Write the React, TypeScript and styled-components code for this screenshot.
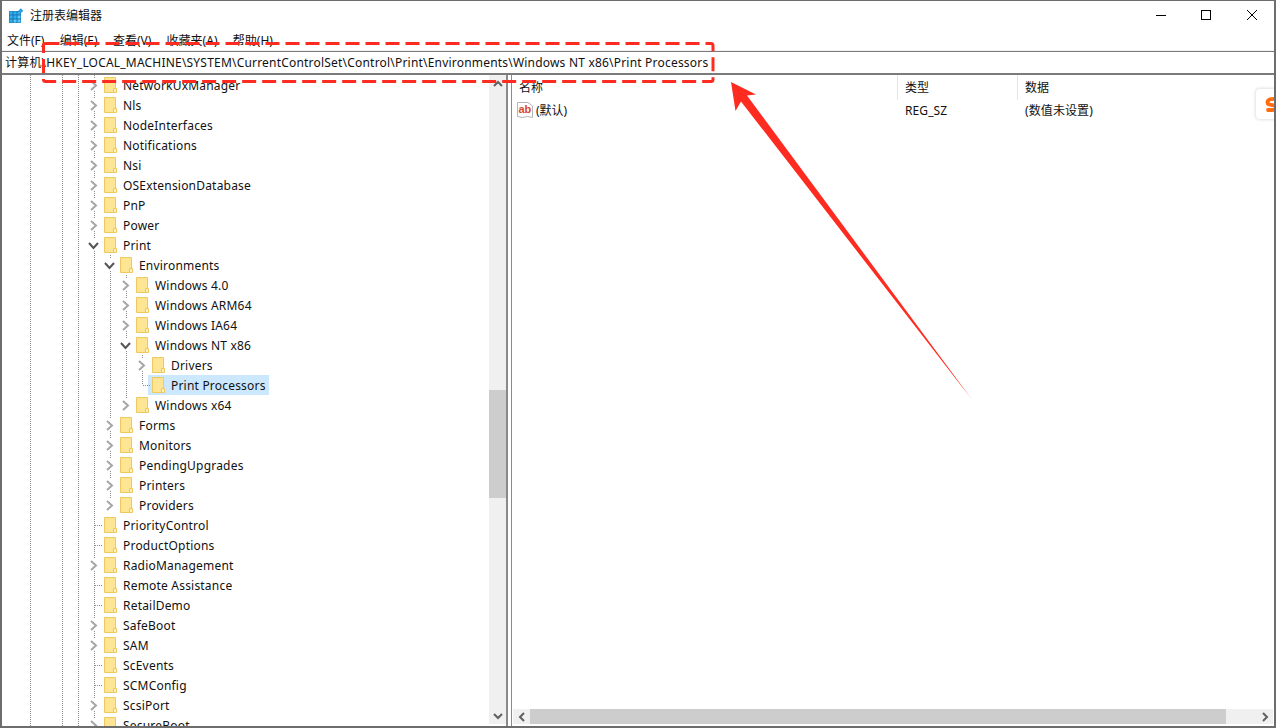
import React from 'react';
import styled, { createGlobalStyle } from 'styled-components';

const GlobalStyle = createGlobalStyle`
    html, body {
        margin: 0;
        padding: 0;
        background: #ffffff;
    }
    * {
        box-sizing: border-box;
    }
`;

const Window = styled.div`
    position: relative;
    width: 1276px;
    height: 728px;
    display: flex;
    flex-direction: column;
    overflow: hidden;
    background: #ffffff;
    border: 1px solid #6d6d6d;
    border-width: 1px 2px 2px 2px;
    font-family: 'Noto Sans', 'Noto Sans CJK SC', sans-serif;
    font-size: 12px;
    color: #111111;
`;

const TitleBar = styled.div`
    height: 29px;
    display: flex;
    align-items: center;
    padding: 0 0 1px 7px;
    flex-shrink: 0;
`;

const Title = styled.div`
    margin-left: 6px;
`;

const Controls = styled.div`
    margin-left: auto;
    display: flex;
    align-items: center;
    padding-right: 17px;
    gap: 35px;
    & > svg:last-child {
        margin-left: 1px;
    }
`;

const MenuBar = styled.div`
    height: 21px;
    display: flex;
    align-items: center;
    padding-left: 5px;
    gap: 15.3px;
    flex-shrink: 0;
    border-bottom: 1px solid #f0f0f0;
`;

const AddressBar = styled.div`
    height: 24px;
    display: flex;
    align-items: center;
    padding: 0 0 2px 3px;
    flex-shrink: 0;
    white-space: nowrap;
    letter-spacing: 0.2px;
    border-top: 1px solid #7b7b7b;
    border-bottom: 2px solid #7b7b7b;
`;

const Panes = styled.div`
    flex: 1;
    min-height: 0;
    display: flex;
`;

const TreePane = styled.div`
    width: 506px;
    flex-shrink: 0;
    display: flex;
    border-right: 2px solid #8a8a8a;
`;

const Tree = styled.div`
    flex: 1;
    min-width: 0;
    overflow: hidden;
    padding-left: 20px;
    letter-spacing: 0.2px;
`;

const Row = styled.div`
    height: 20px;
    display: flex;
    align-items: stretch;
    white-space: nowrap;
`;

const Guide = styled.span<{ $kind: 'none' | 'full' | 'last' }>`
    position: relative;
    width: 16px;
    flex-shrink: 0;
    background-repeat: no-repeat;
    background-image: ${(p) =>
        p.$kind === 'none'
            ? 'none'
            : 'repeating-linear-gradient(to bottom, #8c8c8c 0 1px, transparent 1px 2px)'};
    background-position: 8px 0;
    background-size: 1px ${(p) => (p.$kind === 'last' ? '10px' : '100%')};
`;

const Branch = styled.span`
    position: absolute;
    left: 9px;
    top: 10px;
    width: 7px;
    height: 1px;
    background-image: repeating-linear-gradient(to right, #8c8c8c 0 1px, transparent 1px 2px);
`;

const Expander = styled.span`
    position: absolute;
    left: 2px;
    top: 4px;
    width: 11px;
    height: 12px;
    background: #ffffff;
    display: flex;
    align-items: center;
    justify-content: center;
`;

const Item = styled.div<{ $selected?: boolean }>`
    display: flex;
    align-items: center;
    margin-left: -2px;
    padding: 0 3px 0 4px;
    gap: 6px;
    background: ${(p) => (p.$selected ? '#cce8ff' : 'transparent')};
`;

const TreeScrollbar = styled.div`
    width: 17px;
    flex-shrink: 0;
    display: flex;
    flex-direction: column;
    margin-bottom: 2px;
    background: #f0f0f0;
`;

const ArrowBox = styled.div<{ $wide?: boolean }>`
    width: ${(p) => (p.$wide ? '17px' : '100%')};
    height: ${(p) => (p.$wide ? '100%' : '17px')};
    flex-shrink: 0;
    display: flex;
    align-items: center;
    justify-content: center;
`;

const VerticalTrack = styled.div`
    flex: 1;
    padding-top: 298px;
`;

const VerticalThumb = styled.div`
    height: 108px;
    background: #cdcdcd;
`;

const ListPane = styled.div`
    flex: 1;
    min-width: 0;
    display: flex;
    flex-direction: column;
    margin-left: 3px;
    border-left: 1px solid #8a8a8a;
`;

const ListHeader = styled.div`
    height: 25px;
    display: grid;
    grid-template-columns: 386px 120px 1fr;
    flex-shrink: 0;
`;

const HeaderCell = styled.div`
    padding: 0 0 2px 7px;
    display: flex;
    align-items: center;
    border-right: 1px solid #e5e5e5;
    &:last-child {
        border-right: none;
    }
`;

const ListBody = styled.div`
    flex: 1;
    min-height: 0;
`;

const ListRow = styled.div`
    height: 20px;
    display: grid;
    grid-template-columns: 386px 120px 1fr;
    align-items: center;
`;

const NameCell = styled.div`
    display: flex;
    align-items: center;
    gap: 3px;
    padding-left: 5px;
`;

const ValueCell = styled.div`
    padding-left: 7px;
    letter-spacing: 0.1px;
`;

const HorizontalScrollbar = styled.div`
    height: 15px;
    display: flex;
    flex-shrink: 0;
    margin: 0 1px 2px 1px;
    background: #f0f0f0;
`;

const HorizontalTrack = styled.div`
    flex: 1;
    padding-right: 30px;
`;

const HorizontalThumb = styled.div`
    height: 100%;
    background: #cdcdcd;
`;

const SideTab = styled.div`
    position: absolute;
    right: -2px;
    top: 87px;
    width: 21px;
    height: 32px;
    background: #ffffff;
    border: 1px solid #ececec;
    border-right: none;
    border-radius: 5px 0 0 5px;
    box-shadow: 0 0 3px rgba(0, 0, 0, 0.12);
    overflow: hidden;
`;

const Markup = styled.svg`
    position: absolute;
    left: -2px;
    top: -1px;
    pointer-events: none;
`;

type TreeNode = {
    name: string;
    depth: number;
    state: 'closed' | 'open' | 'leaf';
    last?: boolean;
    selected?: boolean;
};

const rows: TreeNode[] = [
    { name: 'NetworkUxManager', depth: 0, state: 'closed' },
    { name: 'Nls', depth: 0, state: 'closed' },
    { name: 'NodeInterfaces', depth: 0, state: 'closed' },
    { name: 'Notifications', depth: 0, state: 'closed' },
    { name: 'Nsi', depth: 0, state: 'closed' },
    { name: 'OSExtensionDatabase', depth: 0, state: 'closed' },
    { name: 'PnP', depth: 0, state: 'closed' },
    { name: 'Power', depth: 0, state: 'closed' },
    { name: 'Print', depth: 0, state: 'open' },
    { name: 'Environments', depth: 1, state: 'open' },
    { name: 'Windows 4.0', depth: 2, state: 'closed' },
    { name: 'Windows ARM64', depth: 2, state: 'closed' },
    { name: 'Windows IA64', depth: 2, state: 'closed' },
    { name: 'Windows NT x86', depth: 2, state: 'open' },
    { name: 'Drivers', depth: 3, state: 'closed' },
    { name: 'Print Processors', depth: 3, state: 'leaf', last: true, selected: true },
    { name: 'Windows x64', depth: 2, state: 'closed', last: true },
    { name: 'Forms', depth: 1, state: 'closed' },
    { name: 'Monitors', depth: 1, state: 'closed' },
    { name: 'PendingUpgrades', depth: 1, state: 'closed' },
    { name: 'Printers', depth: 1, state: 'closed' },
    { name: 'Providers', depth: 1, state: 'closed', last: true },
    { name: 'PriorityControl', depth: 0, state: 'leaf' },
    { name: 'ProductOptions', depth: 0, state: 'leaf' },
    { name: 'RadioManagement', depth: 0, state: 'closed' },
    { name: 'Remote Assistance', depth: 0, state: 'leaf' },
    { name: 'RetailDemo', depth: 0, state: 'leaf' },
    { name: 'SafeBoot', depth: 0, state: 'closed' },
    { name: 'SAM', depth: 0, state: 'closed' },
    { name: 'ScEvents', depth: 0, state: 'leaf' },
    { name: 'SCMConfig', depth: 0, state: 'leaf' },
    { name: 'ScsiPort', depth: 0, state: 'closed' },
    { name: 'SecureBoot', depth: 0, state: 'closed' },
];

const Folder = () => (
    <svg width="13" height="16" viewBox="0 0 13 16">
        <path d="M0.5 0.5H11.5V15.5H0.5Z" fill="#fde594" stroke="#efc95f" />
        <path d="M9.5 15.5V11.5H12.5V15.5Z" fill="#fff0bc" stroke="#efc95f" />
    </svg>
);

const ChevronRight = () => (
    <svg width="9" height="11" viewBox="0 0 9 11">
        <path d="M2 1L7 5.5L2 10" fill="none" stroke="#a6a6a6" strokeWidth="2" />
    </svg>
);

const ChevronDown = () => (
    <svg width="11" height="9" viewBox="0 0 11 9">
        <path d="M1 2L5.5 7L10 2" fill="none" stroke="#555555" strokeWidth="2" />
    </svg>
);

const ScrollArrow = ({ dir }: { dir: 'up' | 'down' | 'left' | 'right' }) => {
    const paths = {
        up: 'M1 6L5 2L9 6',
        down: 'M1 2L5 6L9 2',
        left: 'M6 1L2 5L6 9',
        right: 'M2 1L6 5L2 9',
    };
    const horizontal = dir === 'left' || dir === 'right';
    return (
        <svg width={horizontal ? 8 : 10} height={horizontal ? 10 : 8} viewBox={horizontal ? '0 0 8 10' : '0 0 10 8'}>
            <path d={paths[dir]} fill="none" stroke="#606060" strokeWidth="2" />
        </svg>
    );
};

const RegeditIcon = () => (
    <svg width="15" height="15" viewBox="0 0 15 15">
        <rect x="0" y="3" width="12" height="12" fill="#1378bd" />
        {[0.5, 4.5, 8.5].map((y) =>
            [0.5, 4.5, 8.5].map((x) => (
                <rect key={`${x}-${y}`} x={x} y={y + 3} width="3" height="3" fill={x + y > 9 ? '#5cc8f2' : '#35aee6'} />
            ))
        )}
        <rect x="10" y="1" width="3.6" height="3.6" fill="#2d9fdc" transform="rotate(45 11.8 2.8)" />
    </svg>
);

const StringValueIcon = () => (
    <svg width="16" height="17" viewBox="0 0 16 17">
        <path d="M0.5 0.5H11L15.5 4V15.5L10.5 14.5L5 15.5L0.5 14.5Z" fill="#ffffff" stroke="#b4b4b4" />
        <text x="1.5" y="10.5" fontFamily="'Liberation Sans', sans-serif" fontSize="11" fontWeight="700" fill="#d8492a">
            ab
        </text>
    </svg>
);

const App = () => {
    return (
        <>
            <GlobalStyle />
            <Window>
                <TitleBar>
                    <RegeditIcon />
                    <Title>注册表编辑器</Title>
                    <Controls>
                        <svg width="10" height="10" viewBox="0 0 10 10">
                            <path d="M0 5.5H10" stroke="#000" />
                        </svg>
                        <svg width="10" height="10" viewBox="0 0 10 10">
                            <rect x="0.5" y="0.5" width="9" height="9" fill="none" stroke="#000" />
                        </svg>
                        <svg width="10" height="10" viewBox="0 0 10 10">
                            <path d="M0 0L10 10M10 0L0 10" stroke="#000" />
                        </svg>
                    </Controls>
                </TitleBar>
                <MenuBar>
                    <span>文件(F)</span>
                    <span>编辑(E)</span>
                    <span>查看(V)</span>
                    <span>收藏夹(A)</span>
                    <span>帮助(H)</span>
                </MenuBar>
                <AddressBar>计算机\HKEY_LOCAL_MACHINE\SYSTEM\CurrentControlSet\Control\Print\Environments\Windows NT x86\Print Processors</AddressBar>
                <Panes>
                    <TreePane>
                        <Tree>
                            {rows.map((row) => (
                                <Row key={row.name}>
                                    <Guide $kind="full" />
                                    <Guide $kind="none" />
                                    <Guide $kind="full" />
                                    <Guide $kind="full" />
                                    {Array.from({ length: row.depth }, (_, i) => (
                                        <Guide key={i} $kind="full" />
                                    ))}
                                    <Guide $kind={row.last ? 'last' : 'full'}>
                                        {row.state === 'closed' && (
                                            <Expander>
                                                <ChevronRight />
                                            </Expander>
                                        )}
                                        {row.state === 'open' && (
                                            <Expander>
                                                <ChevronDown />
                                            </Expander>
                                        )}
                                        {row.state === 'leaf' && <Branch />}
                                    </Guide>
                                    <Item $selected={row.selected}>
                                        <Folder />
                                        <span>{row.name}</span>
                                    </Item>
                                </Row>
                            ))}
                        </Tree>
                        <TreeScrollbar>
                            <ArrowBox>
                                <ScrollArrow dir="up" />
                            </ArrowBox>
                            <VerticalTrack>
                                <VerticalThumb />
                            </VerticalTrack>
                            <ArrowBox>
                                <ScrollArrow dir="down" />
                            </ArrowBox>
                        </TreeScrollbar>
                    </TreePane>
                    <ListPane>
                        <ListHeader>
                            <HeaderCell>名称</HeaderCell>
                            <HeaderCell>类型</HeaderCell>
                            <HeaderCell>数据</HeaderCell>
                        </ListHeader>
                        <ListBody>
                            <ListRow>
                                <NameCell>
                                    <StringValueIcon />
                                    <span>(默认)</span>
                                </NameCell>
                                <ValueCell>REG_SZ</ValueCell>
                                <ValueCell>(数值未设置)</ValueCell>
                            </ListRow>
                        </ListBody>
                        <HorizontalScrollbar>
                            <ArrowBox $wide>
                                <ScrollArrow dir="left" />
                            </ArrowBox>
                            <HorizontalTrack>
                                <HorizontalThumb />
                            </HorizontalTrack>
                            <ArrowBox $wide>
                                <ScrollArrow dir="right" />
                            </ArrowBox>
                        </HorizontalScrollbar>
                    </ListPane>
                </Panes>
                <SideTab>
                    <svg width="20" height="30" viewBox="0 0 20 30">
                        <path
                            d="M22 10C17 9.5 12 10 11.5 13C11 16 15 15.8 18 16.3C22 17 21 21 16 21H12"
                            fill="none"
                            stroke="#ff6d10"
                            strokeWidth="3.8"
                            strokeLinecap="round"
                        />
                    </svg>
                </SideTab>
                <Markup width="1276" height="728" viewBox="0 0 1276 728">
                    <defs>
                        <linearGradient id="tail" gradientUnits="userSpaceOnUse" x1="850" y1="240" x2="973" y2="401">
                            <stop offset="0.92" stopColor="#fe2c20" />
                            <stop offset="1" stopColor="#fe2c20" stopOpacity="0.25" />
                        </linearGradient>
                    </defs>
                    <rect
                        x="43.5"
                        y="43.5"
                        width="669.5"
                        height="38"
                        rx="2"
                        fill="none"
                        stroke="#fe2c20"
                        strokeWidth="3"
                        strokeDasharray="14 6"
                    />
                    <path d="M731 82L756 94.5L747 95.5L973 401L741 101.5L735.5 111Z" fill="url(#tail)" />
                </Markup>
            </Window>
        </>
    );
};

export default App;
